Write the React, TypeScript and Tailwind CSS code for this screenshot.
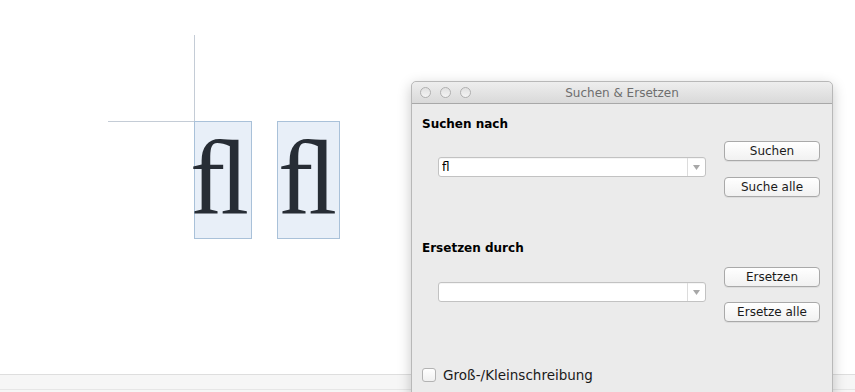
import React, { useState } from 'react';

const uiFont = { fontFamily: '"DejaVu Sans", "Liberation Sans", sans-serif' };

interface ComboProps {
    value: string;
    onChange: (v: string) => void;
}

const Combo: React.FC<ComboProps> = ({ value, onChange }) => (
    <div className="flex h-[20px] w-[268px] rounded-[3px] border border-[#c2c2c2] bg-white shadow-[inset_0_1px_0_rgba(0,0,0,0.04)]">
        <input
            value={value}
            onChange={(e) => onChange(e.target.value)}
            className="min-w-0 flex-1 bg-transparent px-[3px] text-[12px] text-black outline-none"
            style={uiFont}
        />
        <div className="flex w-[18px] items-center justify-center border-l border-[#dcdcdc]">
            <svg width="7" height="5" viewBox="0 0 7 5">
                <path d="M0 0 L7 0 L3.5 5 Z" fill="#a8a8a8" />
            </svg>
        </div>
    </div>
);

const MacButton: React.FC<{ label: string }> = ({ label }) => (
    <button
        className="h-[20px] w-[96px] rounded-[4px] border border-[#a9a9a9] bg-gradient-to-b from-white to-[#f1f1f1] text-[12px] leading-[18px] text-[#1a1a1a] shadow-[0_1px_0_rgba(0,0,0,0.06)]"
        style={uiFont}
    >
        {label}
    </button>
);

const LigatureBox: React.FC<{ className: string; glyphClass: string }> = ({ className, glyphClass }) => (
    <div className={`absolute top-[121px] h-[118px] border border-[#a9c1d9] bg-[#e8eff8] ${className}`}>
        <span
            className={`absolute top-[3px] text-[106px] leading-none text-[#272d35] ${glyphClass}`}
            style={{ fontFamily: '"Liberation Serif", "DejaVu Serif", serif' }}
        >
            {'\uFB02'}
        </span>
    </div>
);

const App: React.FC = () => {
    const [search, setSearch] = useState('fl');
    const [replace, setReplace] = useState('');
    const [matchCase, setMatchCase] = useState(false);

    return (
        <div className="relative h-[392px] w-[855px] overflow-hidden bg-white">
            {/* canvas guides */}
            <div className="absolute left-[194px] top-[35px] h-[86px] w-px bg-[#c4ccd6]" />
            <div className="absolute left-[108px] top-[121px] h-px w-[86px] bg-[#c4ccd6]" />

            <LigatureBox className="left-[194px] w-[58px]" glyphClass="left-[-5px]" />
            <LigatureBox className="left-[277px] w-[63px]" glyphClass="left-[0px]" />

            {/* bottom strip */}
            <div className="absolute bottom-0 left-0 right-0 h-[18px] border-t border-[#dedede] bg-[#f6f6f6]">
                <div className="mt-[14px] h-px bg-[#e6e6e6]" />
            </div>

            {/* dialog window */}
            <div
                className="absolute left-[411px] top-[81px] flex h-[320px] w-[422px] flex-col rounded-t-[5px] border border-[#b8b8b8] bg-[#ebebeb] shadow-[0_4px_14px_rgba(0,0,0,0.22)]"
                style={uiFont}
            >
                <div className="relative flex h-[22px] items-center rounded-t-[5px] border-b border-[#a8a8a8] bg-gradient-to-b from-[#eeeeee] to-[#d9d9d9]">
                    <div className="flex gap-[9px] pl-[8px]">
                        <span className="h-[11px] w-[11px] rounded-full border border-[#b0b0b0] bg-gradient-to-b from-[#e0e0e0] to-[#f4f4f4]" />
                        <span className="h-[11px] w-[11px] rounded-full border border-[#b0b0b0] bg-gradient-to-b from-[#e0e0e0] to-[#f4f4f4]" />
                        <span className="h-[11px] w-[11px] rounded-full border border-[#b0b0b0] bg-gradient-to-b from-[#e0e0e0] to-[#f4f4f4]" />
                    </div>
                    <div className="absolute inset-0 flex items-center justify-center text-[12px] text-[#6e6e6e]">
                        Suchen &amp; Ersetzen
                    </div>
                </div>

                <div className="flex flex-col px-[10px]">
                    <div className="mt-[12px] text-[12px] font-bold leading-[16px] text-black">Suchen nach</div>
                    <div className="mt-[9px] flex items-start">
                        <div className="ml-[16px] mt-[16px]">
                            <Combo value={search} onChange={setSearch} />
                        </div>
                        <div className="ml-[18px] flex flex-col gap-[16px]">
                            <MacButton label="Suchen" />
                            <MacButton label="Suche alle" />
                        </div>
                    </div>

                    <div className="mt-[43px] text-[12px] font-bold leading-[16px] text-black">Ersetzen durch</div>
                    <div className="mt-[11px] flex items-start">
                        <div className="ml-[16px] mt-[15px]">
                            <Combo value={replace} onChange={setReplace} />
                        </div>
                        <div className="ml-[18px] flex flex-col gap-[15px]">
                            <MacButton label="Ersetzen" />
                            <MacButton label="Ersetze alle" />
                        </div>
                    </div>

                    <label className="mt-[44px] flex h-[18px] items-center gap-[7px] text-[13.5px] text-[#1a1a1a]">
                        <span
                            onClick={() => setMatchCase(!matchCase)}
                            className="h-[14px] w-[14px] rounded-[3px] border border-[#b3b3b3] bg-gradient-to-b from-white to-[#f0f0f0]"
                        >
                            {matchCase && (
                                <svg width="12" height="12" viewBox="0 0 12 12">
                                    <path d="M2 6 L5 9 L10 2" stroke="#222" strokeWidth="1.6" fill="none" />
                                </svg>
                            )}
                        </span>
                        Groß-/Kleinschreibung
                    </label>
                </div>
            </div>
        </div>
    );
};

export default App;
